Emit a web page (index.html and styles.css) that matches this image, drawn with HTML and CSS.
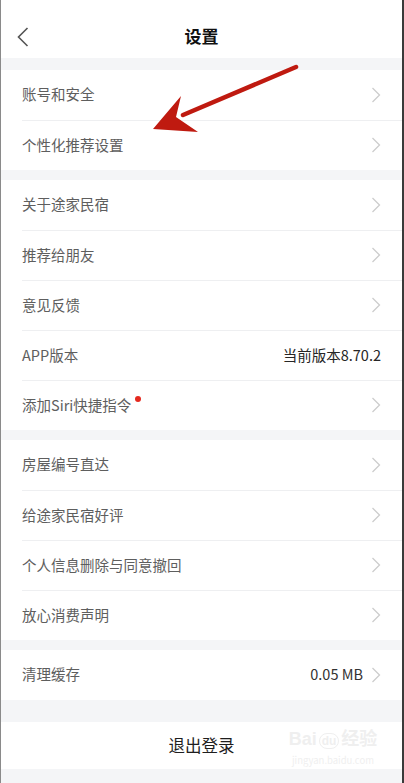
FILE: index.html
```html
<!DOCTYPE html>
<html lang="zh-CN">
<head>
    <meta charset="UTF-8">
    <title>设置</title>
    <link rel="stylesheet" href="styles.css">
</head>
<body>
<div class="page">
    <div class="nav">
        <svg class="back" width="12" height="20" viewBox="0 0 12 20"><path d="M10.5 1 L1.5 10 L10.5 19" fill="none" stroke="#555" stroke-width="1.6"/></svg>
        <h1>设置</h1>
    </div>

    <ul class="group">
        <li><span class="label">账号和安全</span><svg class="more" width="10" height="16" viewBox="0 0 10 16"><path d="M1.5 1 L8.5 8 L1.5 15" fill="none" stroke="#cdcdcd" stroke-width="1.3"/></svg></li>
        <li><span class="label">个性化推荐设置</span><svg class="more" width="10" height="16" viewBox="0 0 10 16"><path d="M1.5 1 L8.5 8 L1.5 15" fill="none" stroke="#cdcdcd" stroke-width="1.3"/></svg></li>
    </ul>

    <ul class="group">
        <li><span class="label">关于途家民宿</span><svg class="more" width="10" height="16" viewBox="0 0 10 16"><path d="M1.5 1 L8.5 8 L1.5 15" fill="none" stroke="#cdcdcd" stroke-width="1.3"/></svg></li>
        <li><span class="label">推荐给朋友</span><svg class="more" width="10" height="16" viewBox="0 0 10 16"><path d="M1.5 1 L8.5 8 L1.5 15" fill="none" stroke="#cdcdcd" stroke-width="1.3"/></svg></li>
        <li><span class="label">意见反馈</span><svg class="more" width="10" height="16" viewBox="0 0 10 16"><path d="M1.5 1 L8.5 8 L1.5 15" fill="none" stroke="#cdcdcd" stroke-width="1.3"/></svg></li>
        <li><span class="label">APP版本</span><span class="value">当前版本8.70.2</span></li>
        <li><span class="label dot">添加Siri快捷指令</span><svg class="more" width="10" height="16" viewBox="0 0 10 16"><path d="M1.5 1 L8.5 8 L1.5 15" fill="none" stroke="#cdcdcd" stroke-width="1.3"/></svg></li>
    </ul>

    <ul class="group">
        <li><span class="label">房屋编号直达</span><svg class="more" width="10" height="16" viewBox="0 0 10 16"><path d="M1.5 1 L8.5 8 L1.5 15" fill="none" stroke="#cdcdcd" stroke-width="1.3"/></svg></li>
        <li><span class="label">给途家民宿好评</span><svg class="more" width="10" height="16" viewBox="0 0 10 16"><path d="M1.5 1 L8.5 8 L1.5 15" fill="none" stroke="#cdcdcd" stroke-width="1.3"/></svg></li>
        <li><span class="label">个人信息删除与同意撤回</span><svg class="more" width="10" height="16" viewBox="0 0 10 16"><path d="M1.5 1 L8.5 8 L1.5 15" fill="none" stroke="#cdcdcd" stroke-width="1.3"/></svg></li>
        <li><span class="label">放心消费声明</span><svg class="more" width="10" height="16" viewBox="0 0 10 16"><path d="M1.5 1 L8.5 8 L1.5 15" fill="none" stroke="#cdcdcd" stroke-width="1.3"/></svg></li>
    </ul>

    <ul class="group">
        <li><span class="label">清理缓存</span><span class="value cache">0.05 MB</span><svg class="more" width="10" height="16" viewBox="0 0 10 16"><path d="M1.5 1 L8.5 8 L1.5 15" fill="none" stroke="#cdcdcd" stroke-width="1.3"/></svg></li>
    </ul>

    <div class="logout">退出登录</div>

    <!-- 红色标注箭头 -->
    <svg class="mark" width="170" height="85" viewBox="0 0 170 85">
        <line x1="155" y1="12" x2="42" y2="60" stroke="#bf1a10" stroke-width="4.5" stroke-linecap="round"/>
        <polygon points="12,74 40,41 35,62 57,77" fill="#bf1a10"/>
    </svg>

    <div class="watermark">
        <span class="wm-logo">Bai<b>du</b>经验</span>
        <span class="wm-url">jingyan.baidu.com</span>
    </div>
</div>
</body>
</html>
```

FILE: styles.css
```css
* {
    margin: 0;
    padding: 0;
}

ul {
    list-style: none;
}

html, body {
    background: #f4f5f7;
}

body {
    font-family: "Noto Sans CJK SC", "Liberation Sans", sans-serif;
}

.page {
    position: relative;
    width: 401px;
    height: 783px;
    border-left: 1px solid #8a8a8a;
    border-right: 2px solid #3a3a3a;
    background: #f4f5f7;
    overflow: hidden;
}

.nav {
    position: relative;
    height: 58px;
    background: #fff;
    display: flex;
    align-items: center;
    justify-content: center;
    margin-bottom: 12px;
}

.nav .back {
    position: absolute;
    left: 16px;
    top: 27px;
}

.nav h1 {
    font-size: 17px;
    font-weight: bold;
    color: #111;
    margin-top: 13px;
}

.group {
    background: #fff;
    margin-bottom: 10px;
    padding-left: 21px;
}

.group li {
    height: 50px;
    display: flex;
    align-items: center;
    padding-right: 21px;
    padding-bottom: 3px;
    box-sizing: border-box;
}

.group li + li {
    border-top: 1px solid #eeeff1;
}

.label {
    flex: 1;
    font-size: 14.5px;
    color: #5e5e5e;
}

.label.dot {
    position: relative;
    flex: none;
    margin-right: auto;
}

.label.dot::after {
    content: "";
    position: absolute;
    right: -10px;
    top: 2px;
    width: 6px;
    height: 6px;
    border-radius: 50%;
    background: #e4291f;
}

.value {
    font-size: 14.5px;
    color: #262626;
}

.value.cache {
    color: #333;
    margin-right: 8px;
}

.more {
    display: block;
    margin-top: 2px;
}

.group:nth-of-type(4) {
    margin-bottom: 22px;
}

.logout {
    height: 47px;
    background: #fff;
    text-align: center;
    line-height: 47px;
    font-size: 16.5px;
    color: #1e1e1e;
}

.mark {
    position: absolute;
    left: 140px;
    top: 55px;
}

.watermark {
    position: absolute;
    left: 284px;
    top: 728px;
    width: 96px;
    text-align: center;
    color: #efefef;
}

.wm-logo {
    display: block;
    font-size: 18px;
    font-weight: bold;
    line-height: 22px;
    font-family: "Liberation Sans", "Noto Sans CJK SC", sans-serif;
}

.wm-logo b {
    font-size: 12px;
    border: 1.5px solid #efefef;
    border-radius: 9px;
    padding: 0 2px;
    margin: 0 2px;
}

.wm-url {
    display: block;
    font-size: 9.5px;
    line-height: 12px;
    margin-top: 2px;
}
```
